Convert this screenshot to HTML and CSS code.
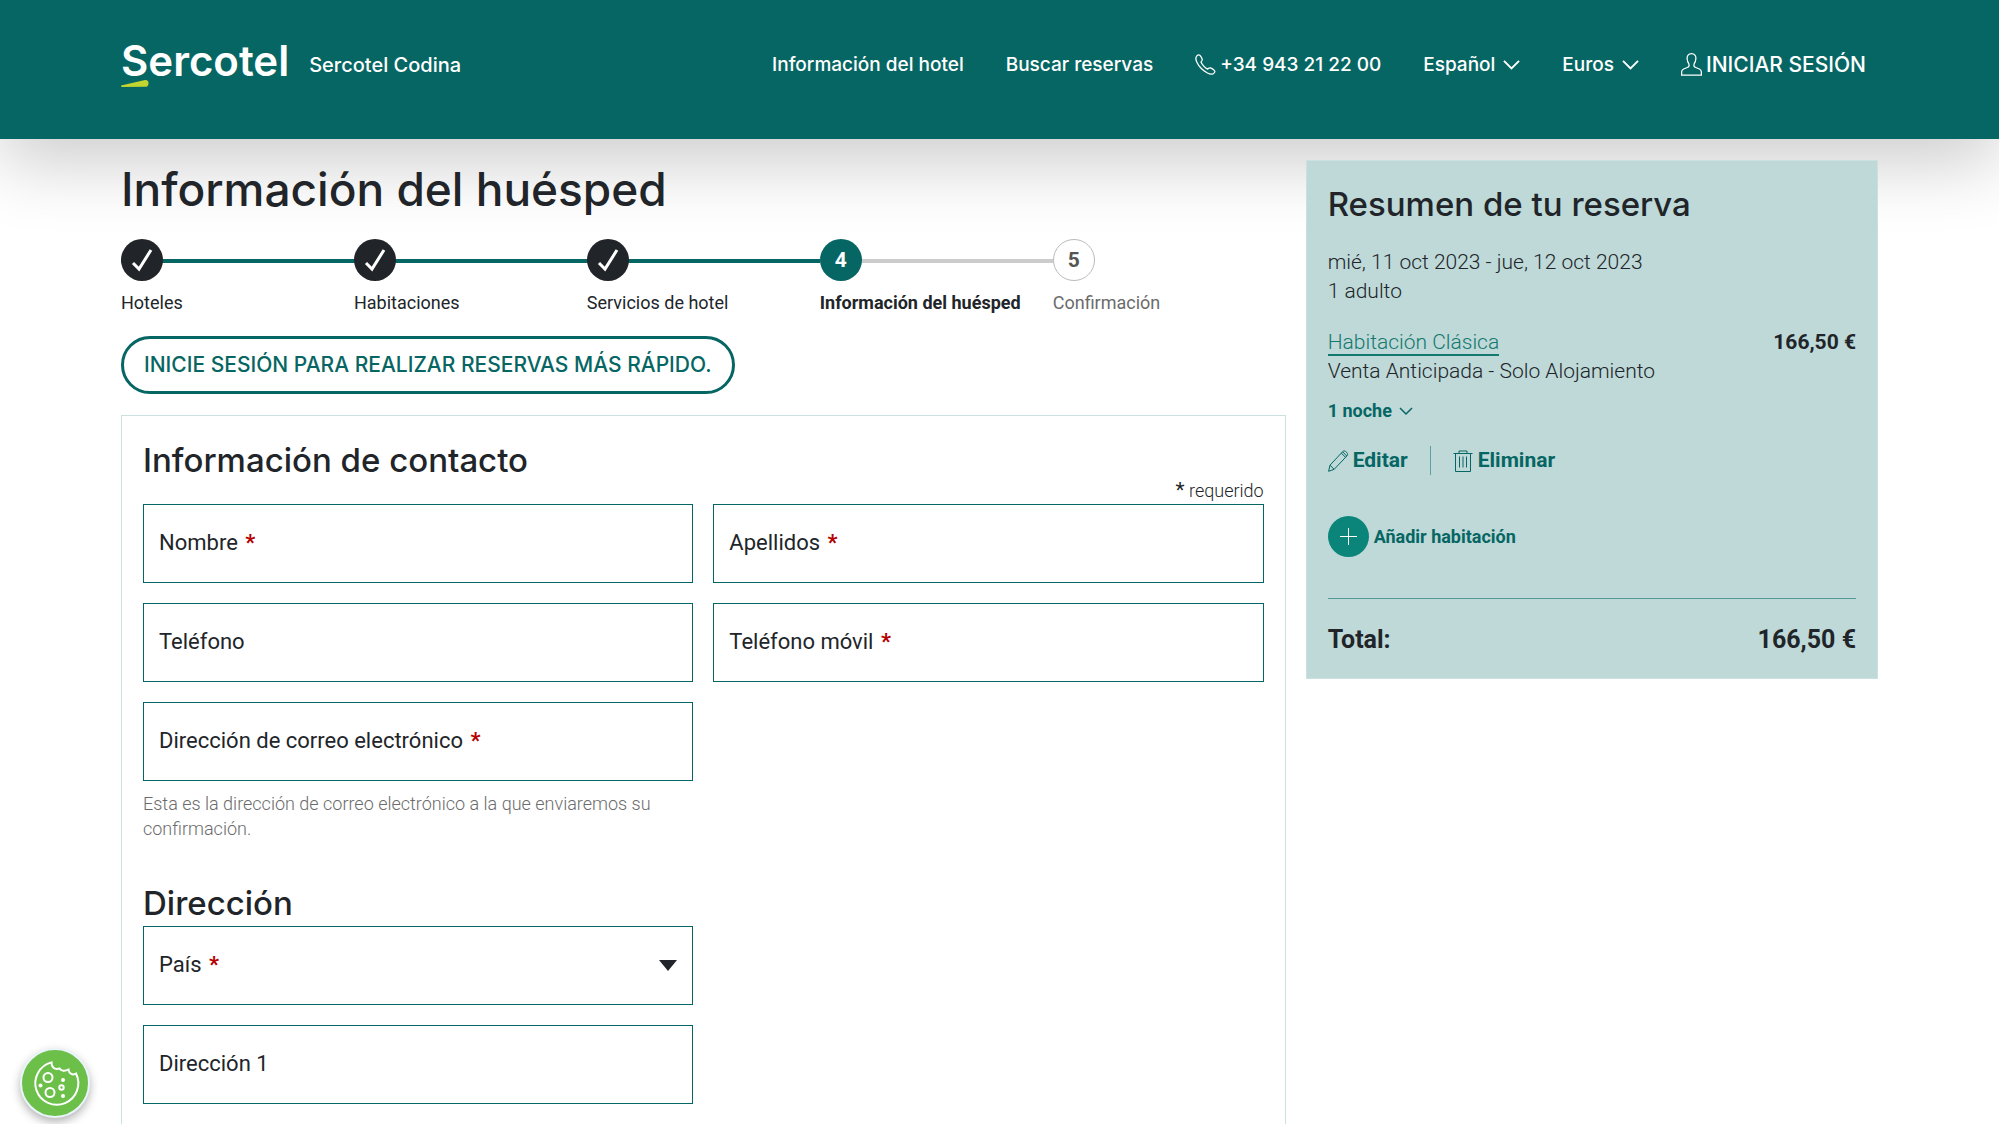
FILE: index.html
```html
<!DOCTYPE html>
<html lang="es">
<head>
<meta charset="utf-8">
<meta name="viewport" content="width=device-width, initial-scale=1">
<title>Información del huésped - Sercotel Codina</title>
<link rel="stylesheet" href="styles.css">
</head>
<body>
<header class="site-header">
  <a class="brand" href="#">
    <span class="logo">Sercotel
      <svg class="logo-mark" viewBox="0 0 28 7" aria-hidden="true"><path d="M0 5.500 23 .2C26-.4 28 1 27.500 4 27.200 6 26 6.800 24 6.800L1 7Q0 7 0 5.500Z"/></svg>
    </span>
    <span class="hotel-name">Sercotel Codina</span>
  </a>
  <nav class="main-nav">
    <a href="#">Información del hotel</a>
    <a href="#">Buscar reservas</a>
    <a class="with-icon" href="tel:+34943212200">
      <svg class="icon" viewBox="0 0 20 20"><path d="M1.200 2.600C2 1.300 3.400.4 4.600 1.200 5.600 2 6.400 3.600 6.900 5c.4 1.200-.8 1.900-1.200 2.600C6.500 10 9.800 13.300 12 14.400c.8-.5 1.400-1.700 2.700-1.200 1.400.6 3 1.500 3.900 2.600.9 1.300-.3 2.500-1.500 3.100-2.600 1.200-7.800-1.700-11.300-5.300S-.2 5 1.200 2.600Z"/></svg>
      +34 943 21 22 00</a>
    <button type="button">Español <svg class="chevron" viewBox="0 0 18 10"><path d="m1 1 8 8 8-8"/></svg></button>
    <button type="button">Euros <svg class="chevron" viewBox="0 0 18 10"><path d="m1 1 8 8 8-8"/></svg></button>
    <a class="with-icon sign-in" href="#">
      <svg class="icon" viewBox="0 0 20 22"><path d="M10 .7c3 0 4.300 2 4.200 4.500-.1 2-.7 3.700-1.700 5.200-.5 1.600-.2 2.700 1 3.200l4 1.600c1.300.6 1.900 1.500 1.900 3v2.900H.6v-2.900c0-1.500.6-2.400 1.900-3l4-1.600c1.200-.5 1.500-1.600 1-3.200-1-1.500-1.600-3.200-1.700-5.200C5.700 2.700 7 .7 10 .7Z"/></svg>
      INICIAR SESIÓN</a>
  </nav>
</header>

<main class="page">
  <section class="guest">
    <h1>Información del huésped</h1>
    <ol class="steps">
      <li class="step done"><span class="dot"><svg viewBox="0 0 20 22"><path d="m1 14 6 6L19 1"/></svg></span>Hoteles</li>
      <li class="step done"><span class="dot"><svg viewBox="0 0 20 22"><path d="m1 14 6 6L19 1"/></svg></span>Habitaciones</li>
      <li class="step done"><span class="dot"><svg viewBox="0 0 20 22"><path d="m1 14 6 6L19 1"/></svg></span>Servicios de hotel</li>
      <li class="step current" aria-current="step"><span class="dot">4</span>Información del huésped</li>
      <li class="step next"><span class="dot">5</span>Confirmación</li>
    </ol>
    <button class="login" type="button">INICIE SESIÓN PARA REALIZAR RESERVAS MÁS RÁPIDO.</button>

    <form class="guest-form">
      <h2>Información de contacto</h2>
      <p class="required-note"><b>*</b> requerido</p>
      <div class="fields">
        <div class="field"><input id="nombre" type="text" required><label for="nombre">Nombre <b>*</b></label></div>
        <div class="field"><input id="apellidos" type="text" required><label for="apellidos">Apellidos <b>*</b></label></div>
        <div class="field"><input id="telefono" type="tel"><label for="telefono">Teléfono</label></div>
        <div class="field"><input id="movil" type="tel" required><label for="movil">Teléfono móvil <b>*</b></label></div>
        <div class="field"><input id="correo" type="email" required aria-describedby="correo-ayuda"><label for="correo">Dirección de correo electrónico <b>*</b></label></div>
      </div>
      <div class="fields">
        <p class="help" id="correo-ayuda">Esta es la dirección de correo electrónico a la que enviaremos su confirmación.</p>
      </div>
      <h2 class="address-title">Dirección</h2>
      <div class="fields single">
        <div class="field"><select id="pais" required><option></option></select><label for="pais">País <b>*</b></label>
          <svg class="caret" viewBox="0 0 18 11" aria-hidden="true"><path d="M0 0h18L9 11Z"/></svg></div>
        <div class="field"><input id="direccion1" type="text"><label for="direccion1">Dirección 1</label></div>
      </div>
    </form>
  </section>

  <aside class="summary">
    <h2>Resumen de tu reserva</h2>
    <p>mié, 11 oct 2023 - jue, 12 oct 2023<br>1 adulto</p>
    <div class="room">
      <p><a class="room-link" href="#">Habitación Clásica</a><br>Venta Anticipada - Solo Alojamiento</p>
      <strong>166,50 €</strong>
    </div>
    <button class="nights" type="button">1 noche <svg viewBox="0 0 14 8"><path d="m1 1 6 6 6-6"/></svg></button>
    <div class="actions">
      <button type="button"><svg class="thin" viewBox="0 0 20 22"><path d="M.6 21.300 2 15.200 14.500 1.800c1-1.100 2.200-1.200 3.200-.3l1.200 1.200c1 1 .9 2.200-.1 3.300L6.200 19.300ZM2 15.200l4.200 4.100M13.300 3.100l4.200 4.200M14.600 1.800l4.200 4.200"/></svg>Editar</button>
      <button type="button"><svg class="thin" viewBox="0 0 20 22"><path d="M.5 3.500h19M6 3.500V1h8v2.500M2.500 3.500v18h15v-18M6.500 6.500v11M10 6.500v11M13.500 6.500v11"/></svg>Eliminar</button>
    </div>
    <button class="add-room" type="button"><span class="plus"><svg viewBox="0 0 17 17"><path d="M8.500 0v17M0 8.500h17"/></svg></span>Añadir habitación</button>
    <p class="total"><span>Total:</span><span>166,50 €</span></p>
  </aside>
</main>

<button class="cookies" type="button" aria-label="Configuración de cookies">
  <svg viewBox="0 0 45 45"><path d="M18.500 1.400A21.500 21.500 0 1 0 43 12.500C40 14.500 36 13 35.500 8.500 32 10.500 28 10 26.500 7.500 21 9 18.500 6 18.500 1.400Z"/><circle cx="15" cy="16.500" r="4.500"/><circle cx="17" cy="31.500" r="4.500"/><circle cx="28.500" cy="26.500" r="2.200"/><g class="crumb"><circle cx="30" cy="19" r="2"/><circle cx="7.500" cy="24.500" r="2"/><circle cx="30" cy="35" r="2"/></g></svg>
</button>
</body>
</html>
```

FILE: styles.css
```css
:root {
  --teal: #066663;
  --teal-bright: #0b857a;
  --mint: #bed9d8;
  --mint-line: #cae1e0;
  --ink: #212529;
  --grey: #6b6b6b;
  --gutter: 121px;
  --display: Inter, "Liberation Sans", sans-serif;
}

* { box-sizing: border-box; }

body {
  margin: 0;
  background: #fff;
  color: var(--ink);
  font: 300 21px/29px Roboto, "Liberation Sans", sans-serif;
}

h1, h2, p, ol { margin: 0; padding: 0; font-weight: inherit; }

button {
  margin: 0;
  padding: 0;
  border: 0;
  background: none;
  color: inherit;
  font: inherit;
  cursor: pointer;
}

svg { display: block; fill: none; stroke: currentColor; overflow: visible; }

/* Header */
.site-header {
  display: flex;
  justify-content: space-between;
  align-items: center;
  height: 139px;
  padding: 0 calc(var(--gutter) + 12px) 10px var(--gutter);
  background: var(--teal);
  box-shadow: 0 24px 70px rgba(0, 0, 0, .2);
  color: #fff;
  font: 500 19px/30px var(--display);
}

.site-header a { color: inherit; text-decoration: none; }

.brand { display: flex; align-items: center; gap: 20px; }

.logo {
  position: relative;
  margin-bottom: 8px;
  font-size: 42px;
  font-weight: 600;
  line-height: 40px;
}

.logo-mark {
  position: absolute;
  left: 0;
  bottom: -6px;
  width: 28px;
  fill: #c1d42f;
  stroke: none;
}

.hotel-name { font-size: 20px; }

.main-nav { display: flex; gap: 42px; }

.main-nav button, .with-icon { display: flex; align-items: center; gap: 8px; }

.with-icon { gap: 4px; }

.sign-in { font-size: 21px; }

.icon { width: 21px; stroke-width: 1.2; }

.chevron { width: 17px; stroke-width: 2; }

/* Page columns */
.page {
  display: grid;
  grid-template-columns: repeat(12, minmax(0, 1fr));
  column-gap: 20px;
  align-items: start;
  padding: 21px var(--gutter) 0;
}

.guest { grid-column: span 8; }

h1 { font: 500 46px/58px var(--display); }

h2 { font: 500 33px/40px var(--display); }

/* Progress */
.steps {
  display: grid;
  grid-template-columns: repeat(5, 1fr);
  margin: 21px 0 19px;
  list-style: none;
  font-size: 18px;
  font-weight: 400;
}

.step {
  display: grid;
  gap: 7px;
  background: linear-gradient(var(--teal), var(--teal)) 0 20px / 100% 4px no-repeat;
  white-space: nowrap;
}

.dot {
  display: grid;
  place-items: center;
  width: 42px;
  height: 42px;
  border-radius: 50%;
  background: var(--ink);
  color: #fff;
  font-size: 21px;
  font-weight: 700;
}

.dot svg { width: 20px; stroke-width: 3; }

.current { background-image: linear-gradient(#ccc, #ccc); font-weight: 700; }

.current .dot { background: var(--teal); }

.next { background: none; color: var(--grey); }

.next .dot { border: 1px solid #bbb; background: #fff; color: #555; }

.login {
  height: 58px;
  padding: 0 20px;
  border: 3px solid var(--teal);
  border-radius: 29px;
  color: var(--teal);
  font: 500 21px/30px var(--display);
}

/* Form */
.guest-form {
  margin-top: 21px;
  padding: 24px 21px 20px;
  border: 1px solid var(--mint-line);
  border-bottom: 0;
}

.required-note {
  margin-bottom: 2px;
  font-size: 18px;
  line-height: 22px;
  text-align: right;
}

.required-note b { font-size: 21px; line-height: 20px; }

.fields { display: grid; grid-template-columns: 1fr 1fr; gap: 20px; }

.single .field { grid-column: 1; }

.field { display: grid; align-items: center; font-weight: 400; font-size: 22px; }

.field > * { grid-area: 1 / 1; }

.field input, .field select {
  width: 100%;
  height: 79px;
  padding: 20px 15px 0;
  border: 1px solid var(--teal);
  border-radius: 0;
  background: #fff;
  color: inherit;
  font: inherit;
  appearance: none;
}

.field label { justify-self: start; padding: 0 16px 2px; pointer-events: none; }

.field b { margin-left: 2px; color: #b50000; }

.caret {
  justify-self: end;
  width: 18px;
  margin-right: 16px;
  fill: var(--ink);
  stroke: none;
  pointer-events: none;
}

.help { padding-top: 10px; color: var(--grey); font-size: 18px; line-height: 25px; }

.address-title { margin: 42px 0 3px; }

/* Booking summary */
.summary {
  grid-column: span 4;
  padding: 23px 21px 22px;
  border: 1px solid var(--mint-line);
  background: var(--mint);
}

.summary h2 { margin-bottom: 24px; }

.room { display: flex; justify-content: space-between; margin: 22px 0 10px; }

.room strong { font-weight: 700; }

.room-link {
  border-bottom: 2px solid currentColor;
  color: #14786f;
  text-decoration: none;
}

.nights, .actions, .add-room { color: var(--teal); font-weight: 700; }

.nights { display: flex; align-items: center; gap: 7px; font-size: 18px; }

.nights svg { width: 14px; stroke-width: 1.5; }

.actions { display: flex; margin: 21px 0 41px; font-size: 21px; }

.actions button { display: flex; align-items: center; gap: 5px; }

.actions button + button {
  margin-left: 22px;
  padding-left: 22px;
  border-left: 1px solid #5fa09d;
}

.thin { width: 20px; stroke-width: 1; }

.add-room { display: flex; align-items: center; gap: 5px; font-size: 18px; }

.plus {
  display: grid;
  place-items: center;
  width: 41px;
  height: 41px;
  border-radius: 50%;
  background: var(--teal-bright);
  color: #fff;
}

.plus svg { width: 17px; }

.total {
  display: flex;
  justify-content: space-between;
  margin-top: 41px;
  padding-top: 25px;
  border-top: 1px solid #569896;
  font-size: 25px;
  font-weight: 700;
  line-height: 32px;
}

/* Cookie settings */
.cookies {
  position: fixed;
  left: 20px;
  bottom: 6px;
  display: grid;
  place-items: center;
  width: 70px;
  height: 70px;
  border: 2px solid #eaf4fb;
  border-radius: 50%;
  background: #6cc04a;
  box-shadow: 0 4px 10px rgba(0, 0, 0, .3);
  color: #fff;
}

.cookies svg { width: 45px; stroke-width: 2; }

.crumb { fill: currentColor; stroke: none; }
```
